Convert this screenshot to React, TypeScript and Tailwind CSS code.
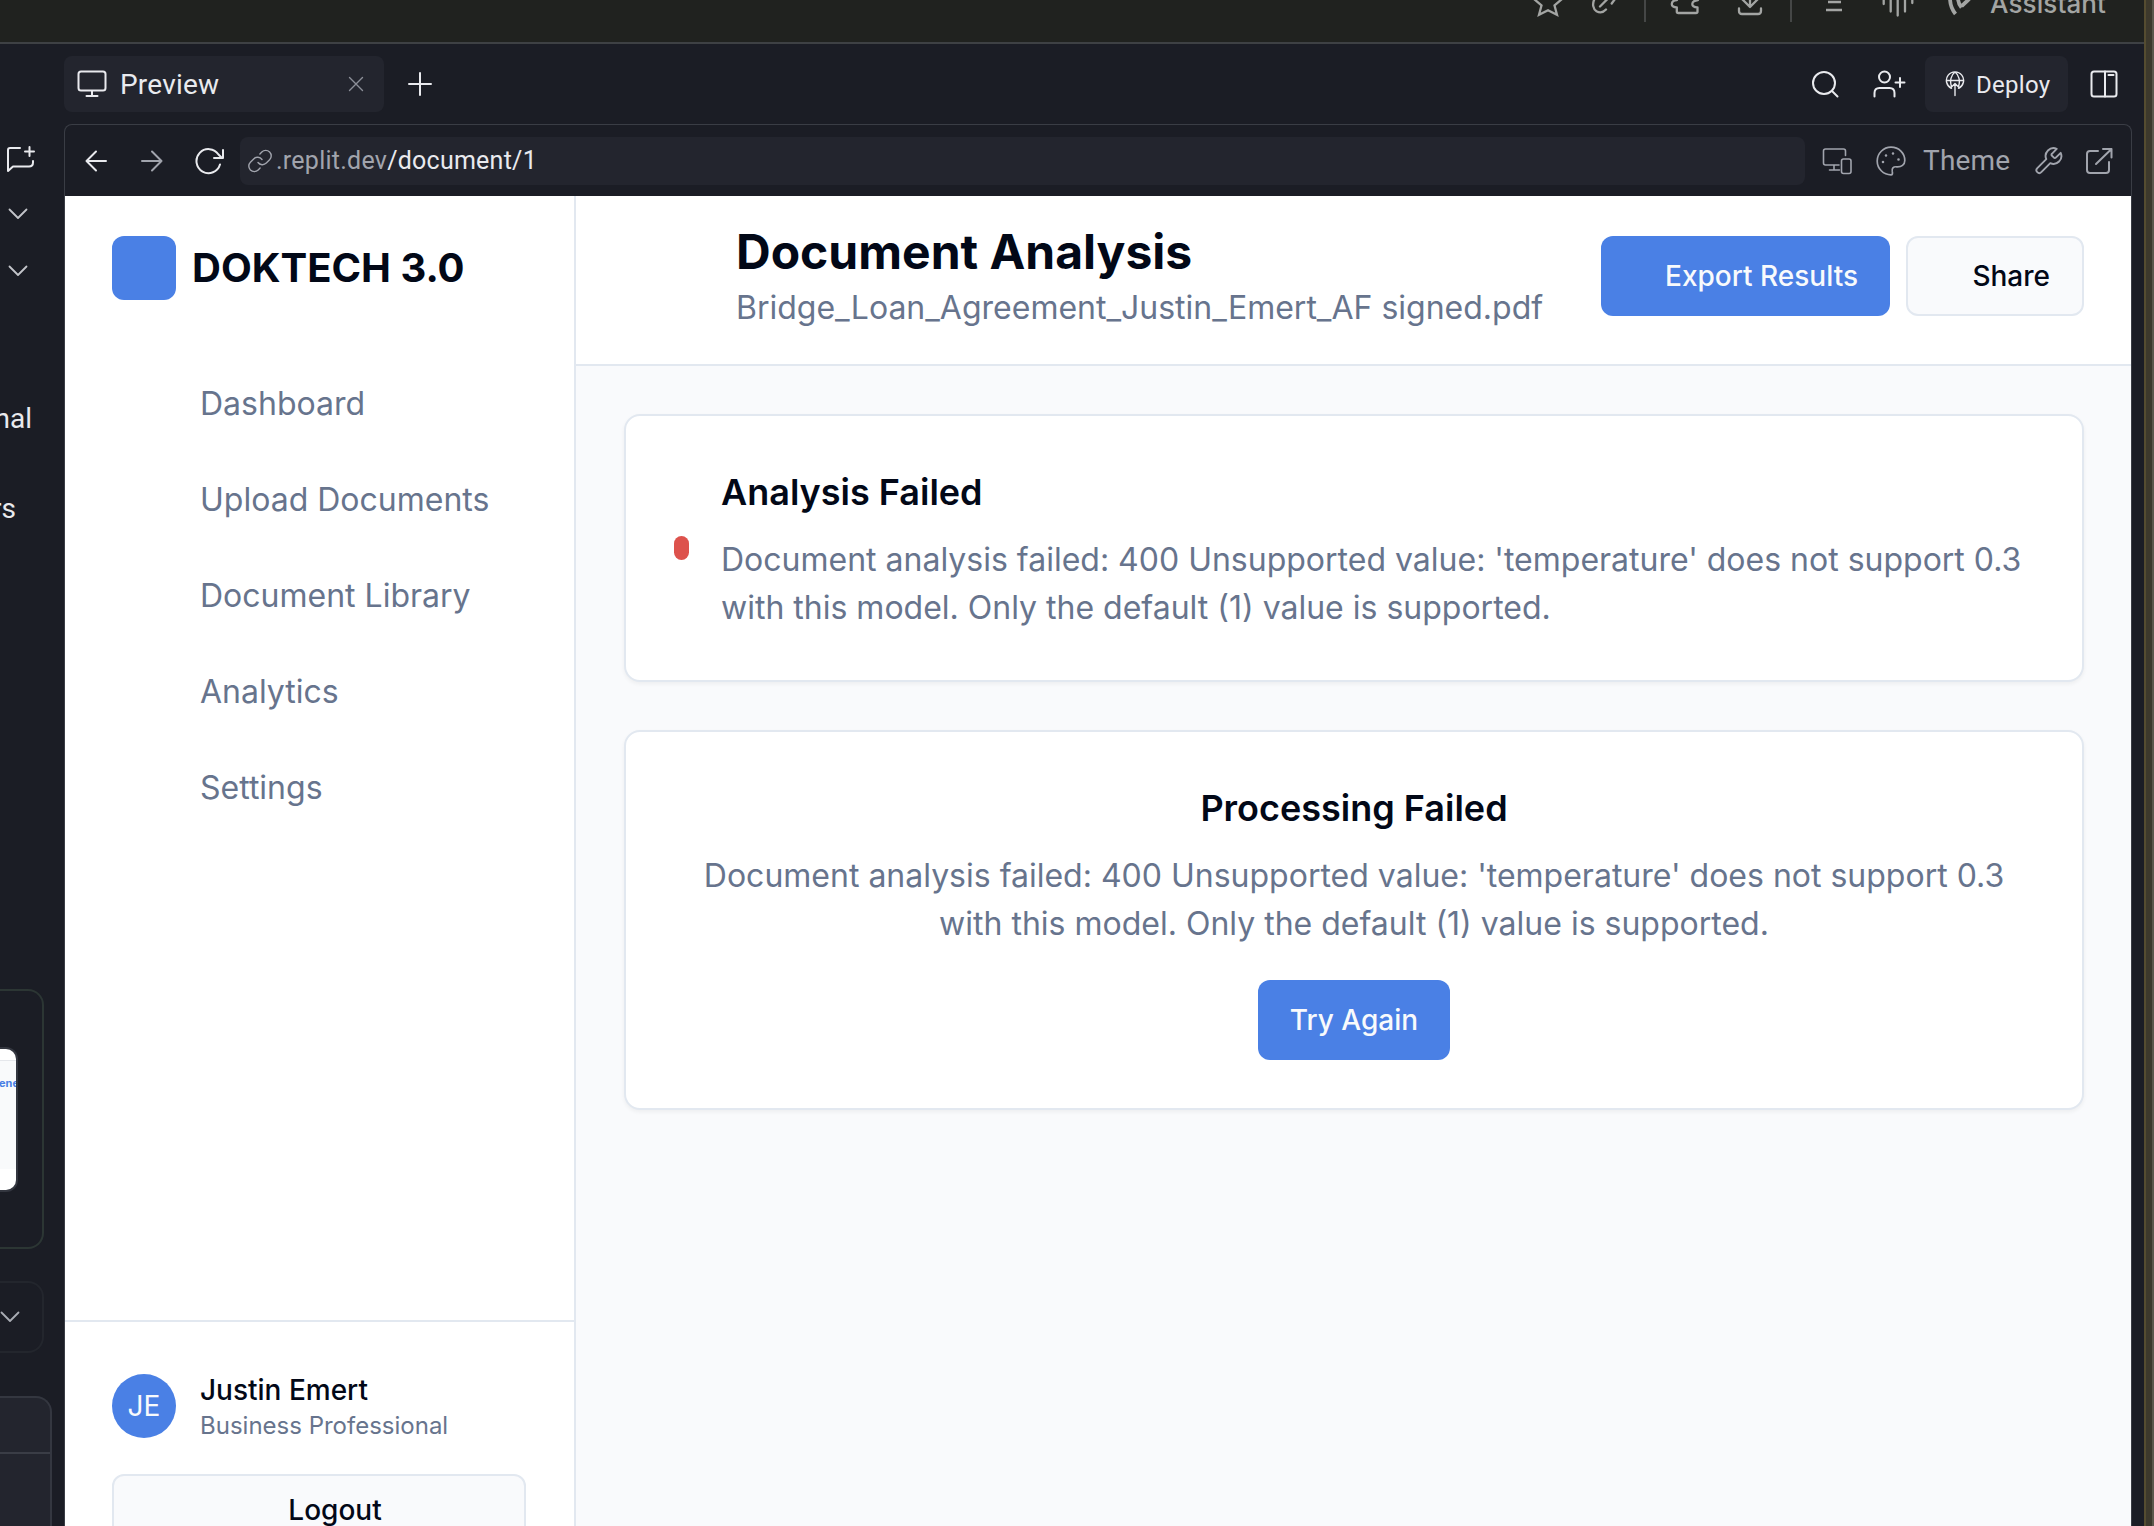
import type { ReactNode } from "react";

function Icon({ w, h, sw = 2, className = "", children }: { w: number; h: number; sw?: number; className?: string; children: ReactNode }) {
  return (
    <svg
      width={w}
      height={h}
      viewBox={`0 0 ${w} ${h}`}
      fill="none"
      stroke="currentColor"
      strokeWidth={sw}
      strokeLinecap="round"
      strokeLinejoin="round"
      className={`block shrink-0 ${className}`}
    >
      {children}
    </svg>
  );
}

const Chevron = ({ className }: { className?: string }) => (
  <Icon w={20} h={12} sw={1.8} className={className}>
    <path d="M1.500 1.500 10 10l8.500-8.500" />
  </Icon>
);

function BrowserBar() {
  return (
    <div className="flex h-11 shrink-0 items-start overflow-hidden border-b-2 border-[#3e4144] bg-[#20221f] pl-[1530px] text-[#a3a5a3]">
      <Icon w={36} h={20} sw={2.3}>
        <path d="M4-1l7.500 6.500L9 14.800l9-4.500 9 4.500-2.500-9.300L32-1" strokeLinejoin="miter" />
      </Icon>
      <Icon w={30} h={20} sw={2.3} className="ml-6">
        <path d="M4.500-1C2 4 3 9 6.500 11.200c3.500 2 7 1 9.500-1.700M10 6.500 17.500-1M21.700 3.500 25-1" />
      </Icon>
      <div className="ml-6 h-[22px] w-0.5 bg-[#454746]" />
      <Icon w={34} h={20} sw={2.3} className="ml-[22px]">
        <path d="M9 0C5 .3 3.800 2 3.800 4c0 2.500 2 3.300 5 3.300V11.500q0 1.500 1.500 1.500H28q1.500 0 1.500-1.500V7.300C26 7.300 24.300 6 24.300 4c0-2 1.500-3.500 5.700-4" />
      </Icon>
      <Icon w={28} h={20} sw={2.3} className="ml-[34px]">
        <path d="M3 8.500V11q0 3 3 3h16q3 0 3-3V8.500M14-2V6.500M6.500-.5 14 7l7.500-7.500" />
      </Icon>
      <div className="ml-[26px] h-[22px] w-0.5 bg-[#454746]" />
      <Icon w={20} h={20} sw={2.5} className="ml-8">
        <path d="M4 2h13M2 10h16" strokeLinecap="butt" />
      </Icon>
      <Icon w={34} h={20} sw={2.3} className="ml-[38px]">
        <path d="M1.700 0v4M8.700 0v11.500M15.700 0v15.500M23 0v11.500M30.300 0v3" />
      </Icon>
      <Icon w={28} h={20} sw={3.8} className="ml-[30px]">
        <path d="M4-2c0 6 1.500 11 5.500 16M12-2c0 4 1 6.500 3.500 9.500M15.500 7C16 4.500 20 3 23.500-1.500" strokeLinecap="butt" />
      </Icon>
      <span className="ml-4 -mt-[13px] h-10 font-[Inter] text-[26px] leading-[33px] font-medium tracking-[0.1px] whitespace-nowrap">Assistant</span>
    </div>
  );
}

function LeftRail() {
  return (
    <div className="relative flex h-full w-16 shrink-0 flex-col items-start overflow-hidden font-[Roboto] text-[28px] text-[#e9eaee]">
      <Icon w={30} h={28} sw={2} className="mt-[101px] ml-[6px]">
        <path d="M14 3H4q-2 0-2 2v21l5-4.500h16q4 0 4-4V16M23.500 2v9M19 6.500h9" />
      </Icon>
      <Chevron className="mt-[35px] ml-2 text-[#c3c5ca]" />
      <Chevron className="mt-[45px] ml-2 text-[#c3c5ca]" />
      <div className="mt-[122px] flex w-8 justify-end leading-10">nal</div>
      <div className="mt-[50px] flex w-[16px] justify-end leading-10">rs</div>
      <div className="mt-[460px] flex h-[260px] w-11 shrink-0 flex-col rounded-r-2xl border-y-2 border-r-2 border-[#2c3634]">
        <div className="mt-14 h-[145px] w-[18px] shrink-0 overflow-hidden rounded-r-xl border-y-2 border-r-2 border-[#33363f] bg-white">
          <div className="h-3 border-b border-[#e5e7eb]" />
          <div className="flex h-[108px] w-4 items-start overflow-hidden bg-[#f9fafb] pt-4">
            <span className="-ml-px font-[Inter] text-[11px] leading-3 font-bold text-[#4a80e5]">ene</span>
          </div>
        </div>
      </div>
      <div className="mt-8 flex h-[72px] w-11 shrink-0 items-center rounded-r-2xl border-y-2 border-r-2 border-[#23262d]">
        <Chevron className="text-[#a9acb4]" />
      </div>
      <div className="mt-[43px] h-[140px] w-[52px] shrink-0 rounded-tr-2xl border-t-2 border-r-2 border-[#343740] bg-[#23252e]">
        <div className="h-14 border-b-2 border-[#3a3d46]" />
      </div>
    </div>
  );
}

function TabBar() {
  return (
    <div className="flex h-20 shrink-0 items-center text-[#e9eaee]">
      <div className="flex h-14 w-80 items-center rounded-lg bg-[#23252e]">
        <Icon w={30} h={28} className="ml-[13px]">
          <rect x="1.500" y="1.500" width="27" height="19" rx="2.500" />
          <path d="M15 21v5M9.500 26h11" />
        </Icon>
        <span className="ml-[13px] pt-0.5 font-[Roboto] text-[28px] leading-9 tracking-[0.2px]">Preview</span>
        <Icon w={16} h={16} sw={1.400} className="mr-5 ml-auto text-[#8c8f98]">
          <path d="m1.500 1.500 13 13m0-13-13 13" />
        </Icon>
      </div>
      <Icon w={24} h={24} className="ml-6">
        <path d="M12 1v22M1 12h22" />
      </Icon>
      <Icon w={28} h={28} className="mr-[34px] ml-auto">
        <circle cx="13" cy="13" r="11" />
        <path d="m21 21 5.500 5.500" />
      </Icon>
      <Icon w={33} h={28} className="mr-[19px]">
        <circle cx="11.500" cy="7" r="5.500" />
        <path d="M1.500 26.500V23q0-5 5-5h10q5 0 5 5v3.500M27 8v9M22.500 12.500h9" />
      </Icon>
      <div className="flex h-14 w-[143px] items-center rounded-lg bg-[#23252e]">
        <Icon w={20} h={26} sw={1.400} className="ml-5">
          <path d="M6.500 17.300A8.600 8.600 0 1 1 13.500 17.300M1.500 9.500h17M6.500 15.500C4.500 10 6 4 10 1c4 3 5.500 9 3.500 14.500M10 24.500V13M5.500 17l4.500-4.500L14.500 17" />
        </Icon>
        <span className="ml-[11px] pt-0.5 font-[Roboto] text-2xl tracking-[0.3px]">Deploy</span>
      </div>
      <Icon w={28} h={28} className="mr-[26px] ml-[22px]">
        <rect x="1.500" y="1.500" width="25" height="25" rx="2.500" />
        <path d="M15 1.500v25M18.500 5h5" />
      </Icon>
    </div>
  );
}

function AddressBar() {
  return (
    <div className="flex h-[71px] shrink-0 items-center text-[#a1a4ad]">
      <Icon w={22} h={22} className="ml-5 text-[#e9eaee]">
        <path d="M21 11H1.500M11 1.500 1.500 11l9.500 9.500" />
      </Icon>
      <Icon w={22} h={22} className="ml-[34px]">
        <path d="M1 11h19.500M11 1.500l9.500 9.500-9.500 9.500" />
      </Icon>
      <Icon w={31} h={28} className="ml-[31px] text-[#e9eaee]">
        <path d="M26 17.500A12 12 0 1 1 24.500 7.500L28 11M29 3v8h-9" />
      </Icon>
      <div className="ml-[15px] flex h-12 w-[1565px] items-center rounded-lg bg-[#23252e]">
        <Icon w={24} h={24} sw={1.400} className="ml-2">
          <path d="M10 13.500a5.500 5.500 0 0 0 8.300.6l3.300-3.300a5.500 5.500 0 0 0-7.800-7.800l-1.900 1.900M14 10.500a5.500 5.500 0 0 0-8.300-.6L2.400 13.200a5.500 5.500 0 0 0 7.800 7.800l1.900-1.900" />
        </Icon>
        <span className="ml-1 font-[Roboto] text-[25px] leading-9 tracking-[0.25px]">
          .replit.dev<span className="text-[#e9eaee]">/document/1</span>
        </span>
      </div>
      <Icon w={30} h={28} sw={1.600} className="ml-[17px]">
        <path d="M23.500 8.500V4q0-2-2-2H3.500q-2 0-2 2v12q0 2 2 2H17M12 18v5M7.500 23h10" />
        <rect x="19.500" y="12" width="9.500" height="14.500" rx="2" />
      </Icon>
      <Icon w={30} h={30} sw={1.700} className="ml-6">
        <path d="M15 1.200a13.800 13.800 0 0 0 0 27.600c1.500 0 1.700-1.500 1.300-3-.8-3.500 1-5.300 4.200-5 5 .4 8.300-2 8.300-6.300C28.800 7 23 1.200 15 1.200Z" />
        <path d="M7 16h.01M10 9.500h.01M17 7.500h.01M22.500 13.500h.01" strokeWidth="2.600" />
      </Icon>
      <span className="ml-[17px] w-[86px] font-[Roboto] text-[28px] leading-9 tracking-[0.2px]">Theme</span>
      <Icon w={30} h={30} sw={1.900} className="ml-6">
        <path d="M18.600 8.300a1.300 1.300 0 0 0 0 1.900l2 2a1.300 1.300 0 0 0 1.900 0l4.900-4.900a7.900 7.900 0 0 1-10.400 10.400l-9 9a2.800 2.800 0 0 1-4-4l9-9A7.900 7.900 0 0 1 23.400 3.300Z" transform="translate(0.300 -0.500)" />
      </Icon>
      <Icon w={28} h={28} className="ml-[22px]">
        <path d="M13 4H5Q2 4 2 7v16q0 3 3 3h16q3 0 3-3V15M11 17 26.500 2M18 2h8.500v8.500" />
      </Icon>
    </div>
  );
}

const NAV = ["Dashboard", "Upload Documents", "Document Library", "Analytics", "Settings"];

function Sidebar() {
  return (
    <aside className="flex w-[511px] shrink-0 flex-col border-r-2 border-[#e2e8f0] bg-white">
      <div className="mt-10 ml-[47px] flex h-16 items-center gap-4">
        <div className="size-16 rounded-xl bg-[#4a80e5]" />
        <span className="text-[40px] leading-[56px] font-bold">DOKTECH 3.0</span>
      </div>
      <nav className="mt-14 ml-[135px] flex flex-col text-[32px] leading-[48px] text-[#67748d]">
        {NAV.map((n) => (
          <a key={n} className="py-6">{n}</a>
        ))}
      </nav>
      <div className="mt-auto flex h-[206px] flex-col border-t-2 border-[#e2e8f0] px-[47px] pt-[52px]">
        <div className="flex h-16 shrink-0 items-center gap-6">
          <div className="flex size-16 items-center justify-center rounded-full bg-[#4a80e5] text-[28px] text-[#f8fafc]">JE</div>
          <div className="flex flex-col">
            <span className="text-[28px] leading-10 font-medium">Justin Emert</span>
            <span className="text-2xl leading-8 text-[#67748d]">Business Professional</span>
          </div>
        </div>
        <div className="mt-9 flex h-[72px] w-[414px] shrink-0 items-center justify-center rounded-xl border-2 border-[#e2e8f0] bg-[#f9fafc] pl-8 text-[28px] font-medium">Logout</div>
      </div>
    </aside>
  );
}

const Message = () => (
  <>
    Document analysis failed: 400 Unsupported value: 'temperature' does not support 0.3
    <br />
    with this model. Only the default (1) value is supported.
  </>
);

function MainContent() {
  return (
    <main className="flex min-w-0 flex-1 flex-col bg-[#f9fafc]">
      <header className="flex h-[170px] shrink-0 items-start border-b-2 border-[#e2e8f0] bg-white pr-[47px] pl-40">
        <div className="mt-6 flex flex-col whitespace-nowrap">
          <h1 className="text-[48px] leading-[64px] font-bold">Document Analysis</h1>
          <p className="text-[32px] leading-[48px] text-[#67748d]">Bridge_Loan_Agreement_Justin_Emert_AF signed.pdf</p>
        </div>
        <div className="mt-10 ml-auto flex gap-4 text-[28px] font-medium">
          <div className="flex h-20 w-[289px] items-center justify-end rounded-xl bg-[#4a80e5] pr-8 text-[#f8fafc]">Export Results</div>
          <div className="flex h-20 w-[178px] items-center justify-end rounded-xl border-2 border-[#e2e8f0] bg-[#f9fafc] pr-8">Share</div>
        </div>
      </header>
      <div className="flex flex-col gap-12 pt-12 pr-[47px] pl-12">
        <section className="flex items-center gap-8 rounded-2xl border-2 border-[#e2e8f0] bg-white p-12 shadow-[0_2px_4px_rgba(0,0,0,0.05)]">
          <div className="h-6 w-[15px] shrink-0 rounded-full bg-[#dd524c]" />
          <div className="flex flex-col gap-4 whitespace-nowrap">
            <h2 className="text-4xl leading-[56px] font-semibold">Analysis Failed</h2>
            <p className="text-[32px] leading-[48px] text-[#67748d]"><Message /></p>
          </div>
        </section>
        <section className="flex flex-col items-center rounded-2xl border-2 border-[#e2e8f0] bg-white p-12 text-center whitespace-nowrap shadow-[0_2px_4px_rgba(0,0,0,0.05)]">
          <h2 className="text-4xl leading-[56px] font-semibold">Processing Failed</h2>
          <p className="mt-4 text-[32px] leading-[48px] text-[#67748d]"><Message /></p>
          <div className="mt-8 flex h-20 w-48 items-center justify-center rounded-xl bg-[#4a80e5] text-[28px] font-medium text-[#f8fafc]">Try Again</div>
        </section>
      </div>
    </main>
  );
}

export default function App() {
  return (
    <div className="flex h-[1526px] w-[2154px] overflow-hidden bg-[#1b1d25] font-[Inter]">
      <div className="flex w-[2144px] shrink-0 flex-col">
        <BrowserBar />
        <div className="flex min-h-0 flex-1">
          <LeftRail />
          <div className="flex min-w-0 flex-1 flex-col">
            <TabBar />
            <div className="mr-3 flex min-h-0 flex-1 flex-col overflow-hidden rounded-t-lg border-x border-t border-[#3a3d45]">
              <AddressBar />
              <div className="flex min-h-0 flex-1 overflow-hidden text-[#020817]">
                <Sidebar />
                <MainContent />
              </div>
            </div>
          </div>
        </div>
      </div>
      <div className="w-0.5 bg-[#554c30]" />
      <div className="w-1.5 bg-[#3d392c]" />
      <div className="w-0.5 bg-[#5c574b]" />
    </div>
  );
}
